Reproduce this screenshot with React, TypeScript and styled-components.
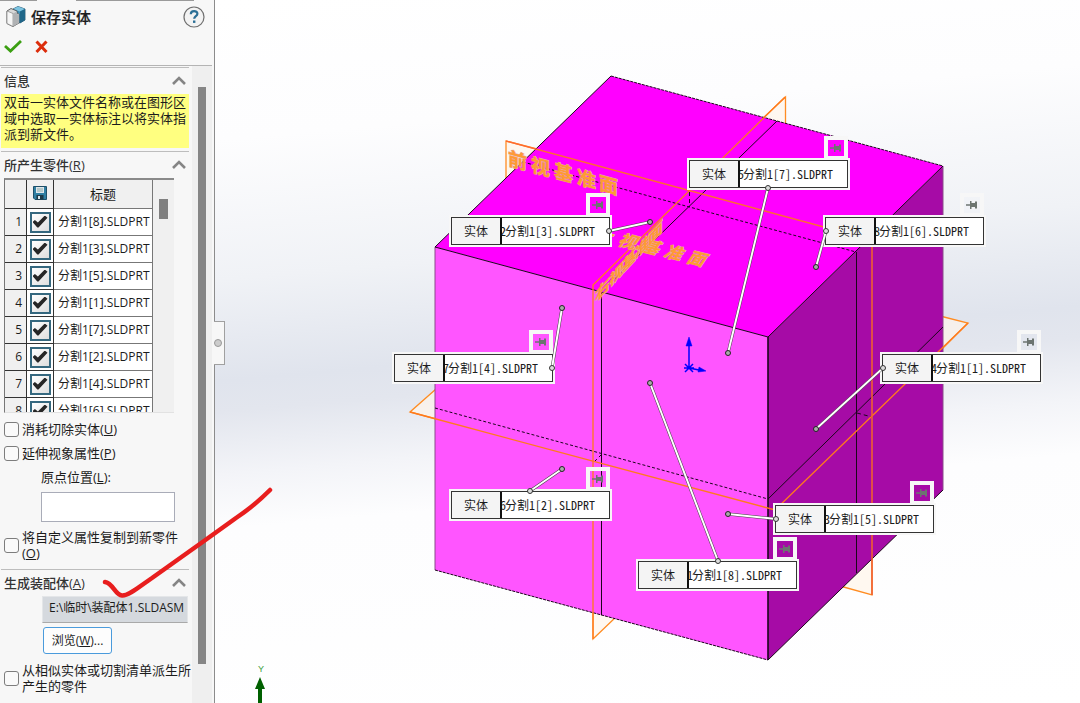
import React from "react";
import styled, { createGlobalStyle } from "styled-components";

const GlobalStyle = createGlobalStyle`
  *, *::before, *::after { box-sizing: border-box; }
  body {
    margin: 0;
    background: #fff;
    color: #1c1c1c;
    font-family: "Open Sans", "Noto Sans CJK SC", sans-serif;
    font-size: 13px;
    line-height: 16px;
  }
  button, input { font: inherit; color: inherit; }
`;

const Page = styled.div`
  position: relative;
  display: flex;
  min-height: 100vh;
  overflow: hidden;
`;

/* ---------- property panel ---------- */

const Panel = styled.aside`
  position: relative;
  z-index: 1;
  flex: 0 0 215px;
  display: flex;
  flex-direction: column;
  background: #f7f7f7;
  border-right: 1px solid #8c8c8c;
`;

const TabEdge = styled.div`
  display: flex;
  gap: 39px;
  height: 1px;
  &::before { content: ""; width: 37px; background: #9a9a9a; }
  &::after { content: ""; flex: 1; margin-right: 20px; background: #9a9a9a; }
`;

const PanelHeader = styled.header`
  margin-right: 2px;
  border-bottom: 1px solid #b4b4b4;
`;

const TitleRow = styled.div`
  display: flex;
  align-items: center;
  height: 32px;
  padding: 0 7px 0 6px;
`;

const Title = styled.h1`
  flex: 1;
  margin: 0 0 0 5px;
  font-size: 15px;
  line-height: 20px;
  font-weight: 500;
  -webkit-text-stroke: 0.2px #1c1c1c;
`;

const IconButton = styled.button`
  display: block;
  padding: 0;
  border: 0;
  background: none;
  line-height: 0;
`;

const Actions = styled.div`
  display: flex;
  align-items: flex-start;
  gap: 12px;
  height: 32px;
  padding: 4px 4px;
`;

const PanelBody = styled.div`
  flex: 1;
  display: flex;
  justify-content: space-between;
`;

const Content = styled.div`
  width: 191px;
  padding: 1px 2px 0 1px;
`;

const ScrollTrack = styled.div`
  display: flex;
  width: 20px;
  margin-right: 2px;
  padding: 21px 6px 39px;
  background: #efefef;
`;

const ScrollThumb = styled.div`
  flex: 1;
  background: #858585;
`;

const Section = styled.section`
  border-top: 1px solid #bdbdbd;
`;

const SectionHead = styled.h2`
  display: flex;
  align-items: center;
  justify-content: space-between;
  height: 26px;
  margin: 0;
  padding: 0 3px;
  font-size: 13px;
  font-weight: 500;
  color: #333;
`;

const Message = styled.p`
  height: 54px;
  margin: 0 0 3px;
  padding: 0 0 0 3px;
  background: #ffff80;
  white-space: nowrap;
`;

const TableFrame = styled.div`
  display: flex;
  width: 170px;
  height: 235px;
  margin: 0 0 8px 3px;
  overflow: hidden;
  background: #f0f0f0;
  border-top: 2px solid #8a8a8a;
  border-left: 1px solid #777;
  border-bottom: 1px solid #e2e2e2;
`;

const PartTable = styled.table`
  width: 148px;
  height: 245px;
  table-layout: fixed;
  border-collapse: separate;
  border-spacing: 0;
  th, td {
    height: 27px;
    padding: 0;
    border-right: 1px solid #333;
    border-bottom: 1px solid #333;
    font-weight: 400;
  }
  thead th { height: 29px; }
  td { background: #fff; }
  td:last-child, th:last-child { border-color: #777; }
`;

const IndexCell = styled.th`
  width: 22px;
  text-align: right;
  font-size: 12px;
  && { padding-right: 4px; }
`;

const CheckCell = styled.th`
  width: 27px;
`;

const NameCell = styled.td`
  && { padding-left: 4px; }
  white-space: nowrap;
  font-size: 12px;
`;

const PartCheck = styled.input`
  appearance: none;
  display: block;
  width: 21px;
  height: 21px;
  margin: 0 auto;
  border: 2px solid #35687f;
  background: linear-gradient(135deg, #fff, #dedede);
  &:checked::after {
    content: "";
    display: block;
    width: 15px;
    height: 12px;
    margin: 2px 1px;
    background: #262626;
    clip-path: polygon(0 55%, 16% 38%, 36% 58%, 82% 0, 100% 18%, 40% 100%, 32% 100%);
  }
`;

const InnerThumb = styled.div`
  width: 9px;
  height: 20px;
  margin: 19px 0 0 6px;
  background: #808080;
`;

const Option = styled.label`
  display: flex;
  align-items: center;
  gap: 3px;
  margin: 0 0 8px 3px;
  white-space: nowrap;
`;

const Check = styled.input`
  appearance: none;
  flex: none;
  width: 15px;
  height: 15px;
  margin: 0;
  border: 1px solid #7d7d7d;
  border-radius: 3px;
  background: #fafafa;
`;

const Field = styled.label`
  display: block;
  margin: 0 0 7px 40px;
`;

const OriginInput = styled.input`
  display: block;
  width: 134px;
  height: 30px;
  margin-top: 7px;
  border: 1px solid #a9acb8;
  background: #fff;
`;

const PathInput = styled.input`
  display: block;
  width: 146px;
  height: 27px;
  margin: 0 0 4px 41px;
  padding: 0 0 6px 6px;
  border: 1px solid #e4e6e8;
  border-bottom: 1px solid #a9a9a9;
  background: #d5d9de;
  font-size: 12px;
`;

const BrowseButton = styled.button`
  display: block;
  height: 27px;
  width: 69px;
  margin: 0 0 8px 42px;
  padding: 0;
  border: 1px solid #4a9bdc;
  border-radius: 3px;
  background: #fdfdfd;
  font-size: 12px;
`;

const PanelHandle = styled.button`
  position: absolute;
  top: 321px;
  left: 214px;
  width: 11px;
  height: 44px;
  padding: 0;
  border: 1px solid #a0a0a0;
  border-left: 0;
  background: #f7f7f7;
  &::after {
    content: "";
    display: block;
    width: 8px;
    height: 8px;
    border: 1px solid #999;
    border-radius: 50%;
    background: #ccc;
  }
`;

/* ---------- graphics area ---------- */

const Viewport = styled.main`
  position: relative;
  flex: 1;
  overflow: hidden;
  background: linear-gradient(
    175deg, #fff 0%, #fdfdfe 18%, #f0f2f6 36%, #e0e4ed 49%, #e3e6ee 53%, #f3f4f8 61%, #fdfdfe 68%, #fff 100%
  );
`;

const Scene = styled.svg`
  position: absolute;
  top: 0;
  left: 0;
  pointer-events: none;
`;

const PlaneText = styled.text`
  font-family: "Noto Sans CJK SC", sans-serif;
  font-weight: 700;
  fill: #ff9a33;
  stroke: #e8a8a0;
  stroke-width: 1px;
  paint-order: stroke;
`;

const Callout = styled.div<{ $x: number; $y: number }>`
  position: absolute;
  left: ${(p) => p.$x}px;
  top: ${(p) => p.$y}px;
  display: flex;
  width: 159px;
  height: 28px;
  border: 1px solid #333;
  outline: 2px solid #f7f7f7;
  background: #fff;
  font-family: "Noto Sans CJK SC", sans-serif;
  font-size: 12px;
  line-height: 26px;
`;

const CalloutKind = styled.span`
  flex: none;
  width: 50px;
  text-align: center;
  background: #f4f4f4;
  border-right: 2px solid #111;
`;

const CalloutName = styled.span`
  flex: 1;
  display: flex;
  gap: 1px;
  overflow: hidden;
  white-space: nowrap;
  text-indent: -2px;
  font-feature-settings: "hwid";
`;

const Pin = styled.button`
  position: absolute;
  right: -1px;
  bottom: 27px;
  width: 24px;
  height: 24px;
  padding: 0;
  border: 4px solid #f7f7f7;
  background: transparent;
  line-height: 0;
`;

const PenMark = styled.svg`
  position: absolute;
  z-index: 2;
  top: 0;
  left: 0;
  pointer-events: none;
`;

const parts = [8, 3, 5, 1, 7, 2, 4, 6];

const callouts = [
  { id: "5", part: 7, x: 474, y: 160 },
  { id: "2", part: 3, x: 236, y: 217 },
  { id: "8", part: 6, x: 610, y: 217 },
  { id: "7", part: 4, x: 179, y: 354 },
  { id: "4", part: 1, x: 667, y: 354 },
  { id: "6", part: 2, x: 236, y: 491 },
  { id: "3", part: 5, x: 560, y: 505 },
  { id: "1", part: 8, x: 423, y: 561 },
];

const leaders = [
  [609, 231, 650, 222],
  [768, 188, 728, 353],
  [826, 231, 816, 267],
  [552, 368, 562, 308],
  [883, 368, 816, 429],
  [530, 491, 562, 469],
  [718, 561, 650, 383],
  [776, 519, 728, 514],
];

const Chevron = () => (
  <svg width="14" height="10" viewBox="0 0 14 10" aria-hidden="true">
    <path d="M1 8 7 2 13 8" fill="none" stroke="#858585" strokeWidth="2.600" />
  </svg>
);

const BodyIcon = () => (
  <svg width="20" height="22" viewBox="0 0 20 22" aria-hidden="true">
    <path d="M7 3 12 0.5 19 3v11l-5 3-5-2z" fill="#3b8fb8" stroke="#1d4e68" strokeWidth=".8" />
    <path d="M7 3 12 .5 19 3 14 5.500z" fill="#7cc3e0" />
    <path d="M14 5.500 19 3v11l-5 3z" fill="#1f6688" />
    <path d="M1 5 5 2.500 11 5v2l2 1V17l-6 3.500-6-3z" fill="#d8d8d8" stroke="#555" strokeWidth=".9" />
    <path d="M1 5 7 7.500V20.500L1 17.500z" fill="#f6f6f6" stroke="#777" strokeWidth=".6" />
    <path d="M7 7.500 11 5.500v3l2-1V17l-6 3.500z" fill="#b0b2b4" />
  </svg>
);

const HelpIcon = () => (
  <svg width="22" height="22" viewBox="0 0 22 22" aria-hidden="true">
    <circle cx="11" cy="11" r="10" fill="#f3f3f3" stroke="#6f6f6f" strokeWidth="1.200" />
    <path d="M7.800 8.200c0-4.200 6.600-4 6.600-.4 0 2.400-3.200 2.400-3.200 5" fill="none" stroke="#2b6f96" strokeWidth="2.200" />
    <rect x="10" y="14.500" width="2.400" height="2.400" fill="#2b6f96" />
  </svg>
);

const SaveIcon = () => (
  <svg width="14" height="14" viewBox="0 0 14 14" aria-hidden="true">
    <path d="M.5.5h13v13H2L.5 12z" fill="#2f7fa3" stroke="#1e4f68" />
    <rect x="3" y="1" width="8" height="6" fill="#dfe6ea" />
    <path d="M4 3h6M4 5h6" stroke="#8aa" />
    <rect x="3.500" y="9" width="7" height="4.500" fill="#1d3947" />
    <rect x="5" y="10" width="2" height="3" fill="#d8e4ea" />
  </svg>
);

const PinIcon = () => (
  <svg width="16" height="16" viewBox="0 0 16 16" aria-hidden="true">
    <path d="M2 8h5" stroke="#6c7470" strokeWidth="1.500" />
    <path d="M6 4h1.500v2H11V4.500h2v7h-2V10H7.500v2H6z" fill="#6c7470" />
  </svg>
);

const Model = () => (
  <Scene width="865" height="703" viewBox="215 0 865 703" role="img" aria-label="分割实体模型">
    <g fill="#fff5ea" fillOpacity=".7" stroke="#ff8c22" strokeWidth="1.300">
      <path d="M506 178V141L560 155" />
      <path d="M760 121 785.500 97V125" />
      <path d="M436 389 410 412 440 420" />
      <path d="M940 316 968 323 940 351" />
      <path d="M593 610V639L617 616" />
      <path d="M840 586 872 595V550" />
    </g>
    <path d="M611 76 943 166 768 337 435 247z" fill="#ff00ff" />
    <path d="M435 247 768 337V660L435 570z" fill="#ff55ff" />
    <path d="M768 337 943 166V490L768 660z" fill="#a60ba6" />
    <path d="M435 247V570M943 166V490" stroke="#8a4a8a" strokeWidth="1" />
    <g fill="none" stroke="#1b061b" strokeWidth="1">
      <path d="M435 247 611 76M768 337 943 166M435 247 768 337M768 660 943 490" />
      <path d="M611 76 943 166M435 570 768 660" strokeDasharray="3 1" />
      <path d="M768 337V660" strokeWidth="1.600" />
      <path d="M601.500 292V615M856.500 252V573M601 292 777 121M768 499 943 327" />
      <path d="M523 162 856 252M435 408 768 499" strokeDasharray="3 2" />
      <path d="M689.500 192V207M594 462 601 455M857 413 872 417" strokeDasharray="4 3" />
    </g>
    <g fill="none" stroke="#ff7a1c" strokeWidth="1.300">
      <path d="M506 141 872 240" stroke="#ff6a30" />
      <path d="M785 97 593 285V639" />
      <path d="M410 412 775 510 968 323" />
      <path d="M872 240V595" stroke="#f06030" strokeWidth="1.600" />
    </g>
    <PlaneText transform="translate(508 165) skewY(15)" fontSize="19" x="0 23 46 69 91">前视基准面</PlaneText>
    <PlaneText transform="translate(594 239) skewY(14) skewX(-30)" fontSize="17" x="0 23 46 69 92">上视基准面</PlaneText>
    <PlaneText transform="translate(595 303) skewY(-47)" fontSize="15" x="0 14 27 40 53">右视基准面</PlaneText>
    <g stroke="#0000ff" fill="#0000ff" strokeWidth="1.500">
      <path d="M689 368V344M684 368h10M685 364l8 8M693 364l-8 8M689 368l10 2" />
      <path d="M689 337l3 9h-6zM706 371l-8 1 1-5z" strokeWidth=".5" />
    </g>
    <text x="258" y="672" fontFamily="Liberation Sans, sans-serif" fontSize="9" fill="#3aa03a">Y</text>
    <path d="M260 677l5 12h-3v14h-4v-14h-3z" fill="#006000" />
  </Scene>
);

const Leaders = () => (
  <Scene width="865" height="703" viewBox="215 0 865 703" aria-hidden="true">
    {leaders.map(([x1, y1, x2, y2]) => (
      <g key={`${x1}-${y1}`}>
        <line x1={x1} y1={y1} x2={x2} y2={y2} stroke="#444" strokeWidth="3" />
        <line x1={x1} y1={y1} x2={x2} y2={y2} stroke="#fff" strokeWidth="2" />
        <circle cx={x1} cy={y1} r="2.500" fill="#ddd" stroke="#333" />
        <circle cx={x2} cy={y2} r="2.500" fill="#aaa" stroke="#222" />
      </g>
    ))}
  </Scene>
);

export default function App() {
  return (
    <Page>
      <GlobalStyle />
      <Panel>
        <TabEdge />
        <PanelHeader>
          <TitleRow>
            <BodyIcon />
            <Title>保存实体</Title>
            <IconButton aria-label="帮助"><HelpIcon /></IconButton>
          </TitleRow>
          <Actions>
            <IconButton aria-label="确定">
              <svg width="18" height="18" viewBox="0 0 18 18">
                <path d="M1 9 6.500 14 17 4" fill="none" stroke="#3b9f12" strokeWidth="2.800" />
              </svg>
            </IconButton>
            <IconButton aria-label="取消">
              <svg width="16" height="18" viewBox="0 0 16 18">
                <path d="M2.500 4.500 12.500 15M12.500 4.500 2.500 15" stroke="#dc2d0c" strokeWidth="3" />
              </svg>
            </IconButton>
          </Actions>
        </PanelHeader>
        <PanelBody>
          <Content>
            <Section>
              <SectionHead>信息 <Chevron /></SectionHead>
              <Message>
                双击一实体文件名称或在图形区<br />域中选取一实体标注以将实体指<br />派到新文件。
              </Message>
            </Section>
            <Section>
              <SectionHead><span>所产生零件(<u>R</u>)</span><Chevron /></SectionHead>
              <TableFrame>
                <PartTable>
                  <thead>
                    <tr>
                      <IndexCell />
                      <CheckCell><SaveIcon /></CheckCell>
                      <th>标题</th>
                    </tr>
                  </thead>
                  <tbody>
                    {parts.map((part, i) => (
                      <tr key={part}>
                        <IndexCell scope="row">{i + 1}</IndexCell>
                        <td><PartCheck type="checkbox" defaultChecked aria-label={`分割1[${part}]`} /></td>
                        <NameCell>分割1[{part}].SLDPRT</NameCell>
                      </tr>
                    ))}
                  </tbody>
                </PartTable>
                <InnerThumb />
              </TableFrame>
              <Option><Check type="checkbox" /><span>消耗切除实体(<u>U</u>)</span></Option>
              <Option><Check type="checkbox" /><span>延伸视象属性(<u>P</u>)</span></Option>
              <Field>原点位置(<u>L</u>):<OriginInput type="text" /></Field>
              <Option>
                <Check type="checkbox" />
                <span>将自定义属性复制到新零件<br />(<u>O</u>)</span>
              </Option>
            </Section>
            <Section>
              <SectionHead><span>生成装配体(<u>A</u>)</span><Chevron /></SectionHead>
              <PathInput type="text" readOnly aria-label="装配体路径" defaultValue={"E:\\临时\\装配体1.SLDASM"} />
              <BrowseButton>浏览(<u>W</u>)...</BrowseButton>
              <Option>
                <Check type="checkbox" />
                <span>从相似实体或切割清单派生所<br />产生的零件</span>
              </Option>
            </Section>
          </Content>
          <ScrollTrack><ScrollThumb /></ScrollTrack>
        </PanelBody>
        <PanelHandle aria-label="折叠面板" />
      </Panel>
      <Viewport>
        <Model />
        {callouts.map((c) => (
          <Callout key={c.id} $x={c.x} $y={c.y}>
            <CalloutKind>实体</CalloutKind>
            <CalloutName>
              <span>{c.id}</span>
              <span>分割1[{c.part}].SLDPRT</span>
            </CalloutName>
            <Pin aria-label="固定标注"><PinIcon /></Pin>
          </Callout>
        ))}
        <Leaders />
      </Viewport>
      <PenMark width="290" height="703" viewBox="0 0 290 703" aria-hidden="true">
        <path
          d="M105 582C113 583 115 595 122 595.500 129 596 140 586 152 578L204 541 236 518C248 510 262 498 270 490"
          fill="none" stroke="#e81e1e" strokeWidth="4.500" strokeLinecap="round" strokeLinejoin="round"
        />
      </PenMark>
    </Page>
  );
}
